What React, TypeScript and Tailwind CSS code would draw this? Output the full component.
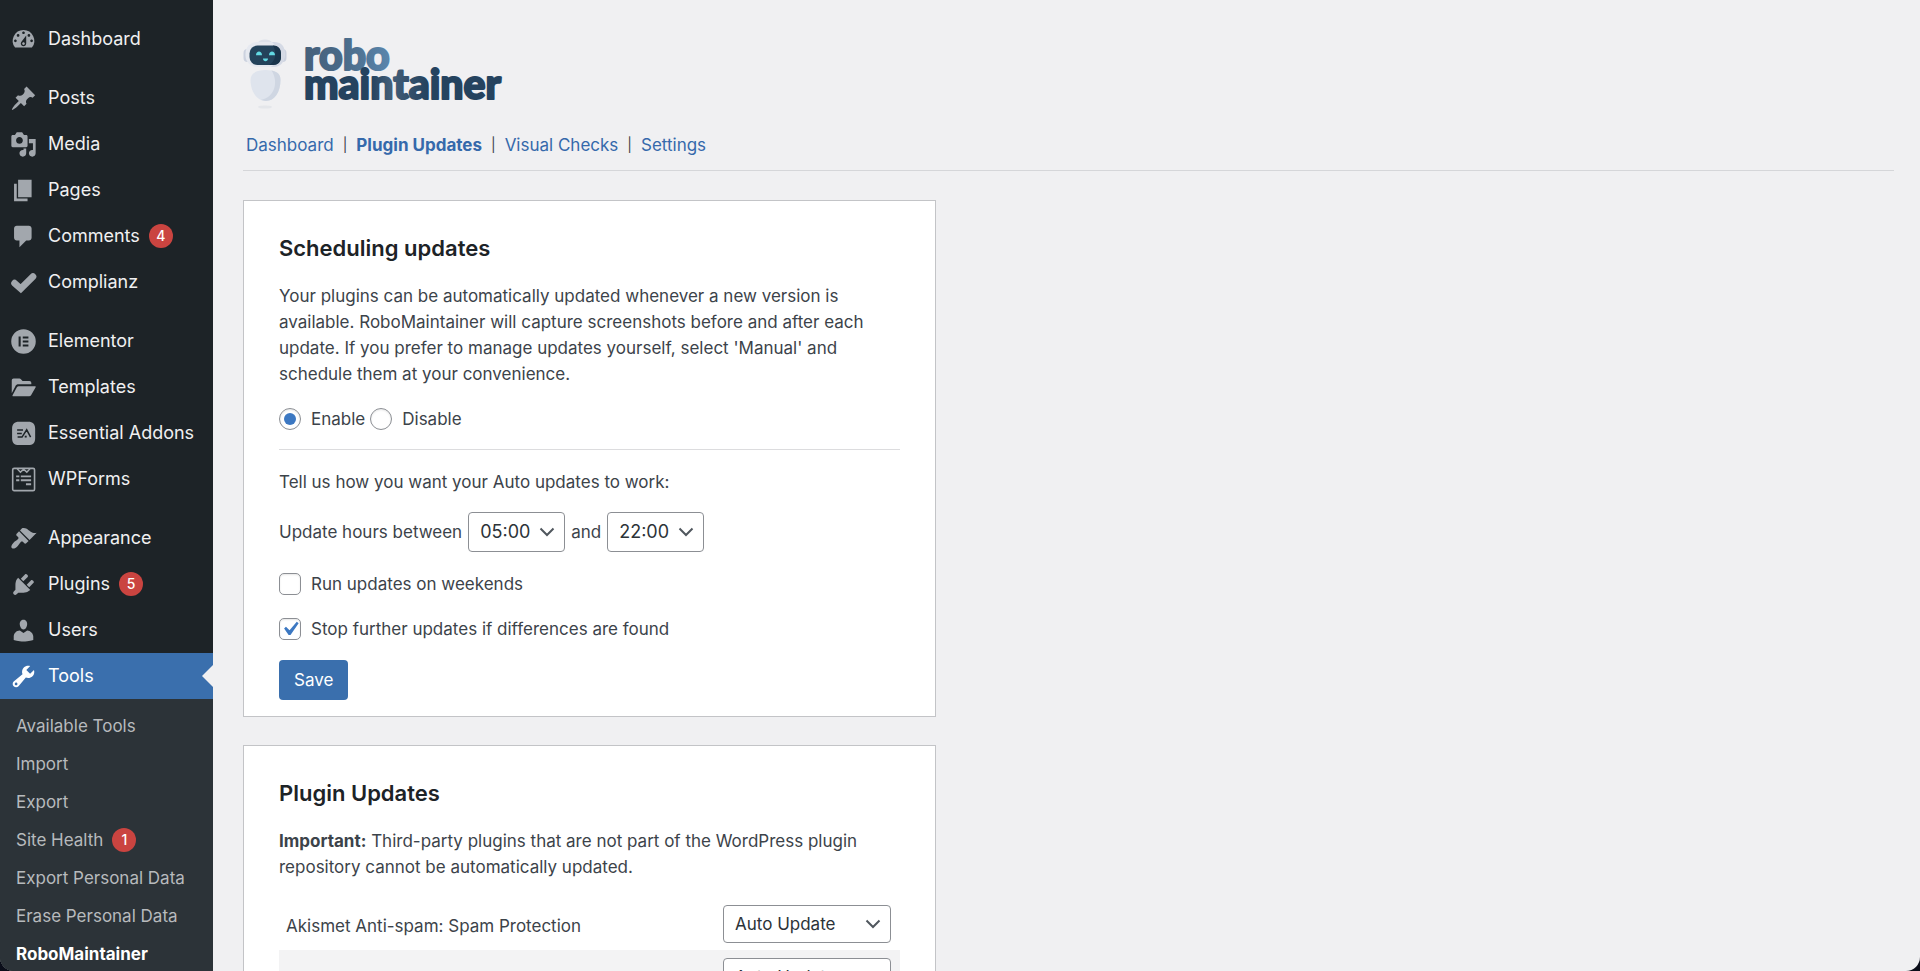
import React, { useState } from "react";

type IconProps = { children: React.ReactNode; box?: string };

const Glyph = ({ children, box = "0 0 20 20" }: IconProps) => (
  <svg viewBox={box} className="h-[27px] w-[27px] shrink-0" fill="currentColor" fillRule="evenodd" aria-hidden="true">
    {children}
  </svg>
);

const icons: Record<string, React.ReactNode> = {
  dashboard: (
    <path d="M3.76 16h12.48A7.998 7.998 0 0 0 10 3a7.998 7.998 0 0 0-6.24 13zM10 4c.55 0 1 .45 1 1s-.45 1-1 1-1-.45-1-1 .45-1 1-1zM6 6c.55 0 1 .45 1 1s-.45 1-1 1-1-.45-1-1 .45-1 1-1zm8 0c.55 0 1 .45 1 1s-.45 1-1 1-1-.45-1-1 .45-1 1-1zm-5.37 5.55L12 7v6c0 1.1-.9 2-2 2s-2-.9-2-2c0-.57.24-1.08.63-1.45zM4 10c.55 0 1 .45 1 1s-.45 1-1 1-1-.45-1-1 .45-1 1-1zm12 0c.55 0 1 .45 1 1s-.45 1-1 1-1-.45-1-1 .45-1 1-1zm-5 3c0-.55-.45-1-1-1s-1 .45-1 1 .45 1 1 1 1-.45 1-1z" />
  ),
  posts: (
    <path d="M10.44 3.02l1.82-1.82 6.36 6.35-1.83 1.82c-1.05-.68-2.48-.57-3.41.36l-.75.75c-.92.93-1.04 2.35-.35 3.41l-1.83 1.82-2.41-2.41-2.8 2.79c-.42.42-3.38 2.71-3.8 2.29s1.86-3.39 2.28-3.81l2.79-2.79L4.1 9.36l1.83-1.82c1.05.69 2.48.57 3.4-.36l.75-.75c.93-.92 1.05-2.35.36-3.41z" />
  ),
  media: (
    <path d="M13 11V4c0-.55-.45-1-1-1h-1.67L9 1H5L3.67 3H2c-.55 0-1 .45-1 1v7c0 .55.45 1 1 1h10c.55 0 1-.45 1-1zM7 4.5c1.38 0 2.5 1.12 2.5 2.5S8.38 9.5 7 9.5 4.5 8.38 4.5 7 5.62 4.5 7 4.5zM14 6h5v10.5c0 1.38-1.12 2.5-2.5 2.5S14 17.88 14 16.5s1.12-2.5 2.5-2.5c.17 0 .34.02.5.05V9h-3V6zm-4 8.05V13h2v3.5c0 1.38-1.12 2.5-2.5 2.5S7 17.88 7 16.5 8.12 14 9.5 14c.17 0 .34.02.5.05z" />
  ),
  pages: <path d="M6 15V2h10v13H6zm-1 1h8v2H3V5h2v11z" />,
  comments: <path d="M5 2h9c1.1 0 2 .9 2 2v7c0 1.1-.9 2-2 2h-2l-5 5v-5H5c-1.1 0-2-.9-2-2V4c0-1.1.9-2 2-2z" />,
  complianz: (
    <path
      d="M3.4 10.5 L8 14.6 L17 5.6"
      fill="none"
      stroke="currentColor"
      strokeWidth="5"
      strokeLinecap="round"
      strokeLinejoin="miter"
    />
  ),
  elementor: (
    <path d="M10 0a10 10 0 1 0 0 20 10 10 0 0 0 0-20zM6 5.9h1.7v8.2H6zM9.4 5.9h4.6v1.6H9.4zM9.4 9.2h4.6v1.6H9.4zM9.4 12.5h4.6v1.6H9.4z" />
  ),
  templates: (
    <>
      <path d="M1.3 14.2V4.8c0-.8.6-1.4 1.4-1.4h4.3c.5 0 .8.2 1.1.5l1.2 1.3h5.1c.8 0 1.4.6 1.4 1.4v1H6.3c-1 0-1.9.5-2.3 1.4z" />
      <path d="M2.3 16.5c-.4 0-.6-.4-.4-.8l3.2-5.9c.3-.5.8-.8 1.4-.8h12c.5 0 .8.5.5.9l-3.4 5.8c-.3.5-.8.8-1.4.8z" />
    </>
  ),
  essential: (
    <>
      <path d="M6.3.5h7.6c3.7 0 5.6 1.9 5.6 5.6v7.7c0 3.7-1.9 5.6-5.6 5.6H6.3c-3.7 0-5.6-1.9-5.6-5.6V6.1C.7 2.4 2.6.5 6.3.5z" />
      <g stroke="#1d2327" strokeWidth="1.2" fill="none">
        <path d="M4.8 7.1h4.8M4.8 10h3.8M5.2 12.9h3.6L12.6 7l3.2 6" />
      </g>
      <path d="M11 11.8h1.6v1.5H11z" fill="#1d2327" />
    </>
  ),
  wpforms: (
    <g fill="none" stroke="currentColor">
      <rect x="1.2" y="0.9" width="17.8" height="18.2" rx="1.2" strokeWidth="1.3" />
      <path d="M4.9 1.3l2.6 2.7L10.1 1.6l2.6 2.4 2.6-2.7" strokeWidth="1.2" />
      <path d="M4 7.4h2.6M7.8 7.4h8.4M4 10.6h2.6M7.8 10.6h8.4M12 13.9h4.2" strokeWidth="1.5" />
    </g>
  ),
  appearance: (
    <path d="M14.48 11.06L7.41 3.99l1.5-1.5c.5-.56 2.3-.47 3.51.32 1.21.8 1.43 1.28 2.91 2.1 1.18.64 2.45 1.26 4.45.85zm-.71.71L6.7 4.7 4.93 6.47c-.39.39-.39 1.02 0 1.41l1.06 1.06c.39.39.39 1.03 0 1.42-.6.6-1.43 1.11-2.21 1.69-.35.26-.7.53-1.01.84C1.43 14.23.4 16.08 1.4 17.07c.99 1 2.84-.03 4.18-1.36.31-.31.58-.66.85-1.02.57-.78 1.08-1.61 1.69-2.21.39-.39 1.02-.39 1.41 0l1.06 1.06c.39.39 1.02.39 1.41 0z" />
  ),
  plugins: (
    <path d="M13.11 4.36L9.87 7.6 8 5.73l3.24-3.24c.35-.34 1.05-.2 1.56.32.52.51.66 1.21.31 1.55zm-8 1.77l.91-1.12 9.01 9.01-1.19.84c-.71.71-2.63 1.16-3.82 1.16H6.14L4.9 17.26c-.59.59-1.54.59-2.12 0a1.49 1.49 0 0 1 0-2.12l1.24-1.24v-3.88c0-1.13.4-3.19 1.09-3.89zm7.26 3.97l3.24-3.24c.34-.35 1.04-.21 1.55.31.52.51.66 1.21.31 1.55l-3.24 3.25z" />
  ),
  users: (
    <path d="M10 9.25c-2.27 0-2.73-3.44-2.73-3.44C7 4.02 7.82 2 9.97 2c2.16 0 2.98 2.02 2.71 3.81 0 0-.41 3.44-2.68 3.44zm0 2.57L12.72 10c2.39 0 4.52 2.33 4.52 4.53v2.49s-3.65 1.13-7.24 1.13c-3.65 0-7.24-1.13-7.24-1.13v-2.49c0-2.25 1.94-4.48 4.47-4.48z" />
  ),
  tools: (
    <path d="M16.68 9.77c-1.34 1.34-3.3 1.67-4.95.99l-5.41 6.52c-.99.99-2.59.99-3.58 0s-.99-2.59 0-3.57l6.52-5.42c-.68-1.65-.35-3.61.99-4.95 1.28-1.28 3.12-1.62 4.72-1.06l-2.89 2.89 2.82 2.82 2.86-2.87c.53 1.58.18 3.39-1.08 4.65zM3.81 16.21c.4.39 1.04.39 1.43 0 .4-.4.4-1.04 0-1.43-.39-.4-1.03-.4-1.43 0-.39.39-.39 1.03 0 1.43z" />
  ),
};

type Item = { icon: string; label: string; count?: number; current?: boolean };

const menu: Item[][] = [
  [{ icon: "dashboard", label: "Dashboard" }],
  [
    { icon: "posts", label: "Posts" },
    { icon: "media", label: "Media" },
    { icon: "pages", label: "Pages" },
    { icon: "comments", label: "Comments", count: 4 },
    { icon: "complianz", label: "Complianz" },
  ],
  [
    { icon: "elementor", label: "Elementor" },
    { icon: "templates", label: "Templates" },
    { icon: "essential", label: "Essential Addons" },
    { icon: "wpforms", label: "WPForms" },
  ],
  [
    { icon: "appearance", label: "Appearance" },
    { icon: "plugins", label: "Plugins", count: 5 },
    { icon: "users", label: "Users" },
    { icon: "tools", label: "Tools", current: true },
  ],
];

const submenu: { label: string; count?: number; current?: boolean }[] = [
  { label: "Available Tools" },
  { label: "Import" },
  { label: "Export" },
  { label: "Site Health", count: 1 },
  { label: "Export Personal Data" },
  { label: "Erase Personal Data" },
  { label: "RoboMaintainer", current: true },
];

const Badge = ({ n }: { n: number }) => (
  <span className="ml-[9px] flex h-6 w-6 items-center justify-center rounded-full bg-[#ca4440] text-sm font-medium text-white">
    {n}
  </span>
);

function Sidebar() {
  return (
    <nav aria-label="Main menu" className="flex w-[213px] shrink-0 flex-col bg-[#1d2327] pt-4">
      <div className="flex flex-col gap-[13px]">
        {menu.map((group, i) => (
          <ul key={i}>
            {group.map((item) => (
              <li key={item.label} className="relative">
                <a
                  href="#"
                  className={
                    item.current
                      ? "flex h-[46px] items-center bg-[#3a6fad] pl-[10px] text-lg text-white"
                      : "flex h-[46px] items-center pl-[10px] text-lg text-[#f0f0f1]"
                  }
                >
                  <span className={item.current ? "text-white" : "text-[#a2a7ad]"}>
                    {item.icon === "elementor" || item.icon === "essential" || item.icon === "wpforms" ? (
                      <Glyph box="-1 -1 22 22">{icons[item.icon]}</Glyph>
                    ) : (
                      <Glyph>{icons[item.icon]}</Glyph>
                    )}
                  </span>
                  <span className="ml-[11px] whitespace-nowrap">{item.label}</span>
                  {item.count !== undefined && <Badge n={item.count} />}
                </a>
                {item.current && (
                  <span className="absolute top-1/2 right-0 -mt-[11px] border-y-[11px] border-r-[11px] border-y-transparent border-r-[#f0f0f2]" />
                )}
              </li>
            ))}
          </ul>
        ))}
      </div>
      <ul className="grow bg-[#2c3338] pt-2">
        {submenu.map((s) => (
          <li key={s.label}>
            <a
              href="#"
              className={
                s.current
                  ? "flex h-[38px] items-center pl-4 text-[17px] font-bold whitespace-nowrap text-white"
                  : "flex h-[38px] items-center pl-4 text-[17px] whitespace-nowrap text-[#b7babd]"
              }
            >
              {s.label}
              {s.count !== undefined && <Badge n={s.count} />}
            </a>
          </li>
        ))}
      </ul>
    </nav>
  );
}

function Logo() {
  return (
    <div className="flex items-start">
      <svg viewBox="0 0 46 74" className="h-[74px] w-[46px]" aria-hidden="true">
        <ellipse cx="22" cy="69" rx="7" ry="1.6" fill="#e4e6ea" />
        <ellipse cx="22" cy="5" rx="7" ry="3.5" fill="#dde1ea" />
        <rect x="0.5" y="11" width="8" height="13" rx="4" fill="#ccd2df" />
        <rect x="35.5" y="11" width="8" height="13" rx="4" fill="#ccd2df" />
        <rect x="2.5" y="4" width="39" height="25" rx="11.5" fill="#e6e9f0" />
        <path d="M29 4h2c7 0 10.5 4 10.5 9v5c0 7-5 11-11 11h-3c8-4 10-18 1.5-25z" fill="#d5dae5" />
        <rect x="6.5" y="7.5" width="31.5" height="19.5" rx="8" fill="#24435b" />
        <path d="M30 7.5c5 0 8 3 8 8V19c0 5-3 8-8 8h-4c7-4 8-12 4-19.5z" fill="#1a354b" />
        <path d="M13 17.2c0-5 6-5 6 0zM26 17.2c0-5 6-5 6 0zM20 20.5h5c0 3.6-5 3.6-5 0z" fill="#62d9e3" />
        <path d="M22.5 32c9 0 15 3 15 10 0 12-6 21-14.5 21S7.5 54 7.5 42c0-7 6-10 15-10z" fill="#dfe4ed" />
        <path d="M28.5 32.5c6 1 9 4 9 9.5 0 12-6 21-14.5 21-2 0-3.500-.5-5-1.2C30.500 60 36.500 45 28.500 32.500z" fill="#cfd6e2" />
      </svg>
      <svg viewBox="0 0 204 68" className="ml-[15px] h-[68px] w-[204px] overflow-visible" role="img" aria-label="robo maintainer">
        <defs>
          <linearGradient id="robo" x1="0" x2="1">
            <stop offset="0" stopColor="#45607b" />
            <stop offset="0.45" stopColor="#4a6a88" />
            <stop offset="1" stopColor="#5a86ac" />
          </linearGradient>
          <linearGradient id="maintainer" x1="0" x2="1">
            <stop offset="0" stopColor="#25435f" />
            <stop offset="0.34" stopColor="#25435f" />
            <stop offset="0.44" stopColor="#435e78" />
            <stop offset="0.62" stopColor="#25435f" />
            <stop offset="1" stopColor="#25435f" />
          </linearGradient>
        </defs>
        <g className="font-['Lato',sans-serif] text-[41px] font-black" strokeWidth="2" strokeLinejoin="round">
          <text x="0" y="32" fill="url(#robo)" stroke="url(#robo)">
            robo
          </text>
          <text x="0" y="61" fill="url(#maintainer)" stroke="url(#maintainer)">
            maintainer
          </text>
        </g>
      </svg>
    </div>
  );
}

const Chevron = () => (
  <svg viewBox="0 0 16 16" className="pointer-events-none absolute right-[10px] h-4 w-4" fill="none" stroke="#50575e" strokeWidth="2" aria-hidden="true">
    <path d="M1.5 4.5 8 11l6.5-6.5" />
  </svg>
);

function Select({ label, value, options, wide }: { label: string; value: string; options: string[]; wide?: boolean }) {
  const [v, setV] = useState(value);
  return (
    <span className="relative inline-flex items-center">
      <select
        aria-label={label}
        value={v}
        onChange={(e) => setV(e.target.value)}
        className={
          wide
            ? "h-[38px] w-[168px] appearance-none rounded border border-[#8c8f94] bg-white pr-8 pl-[11px] text-[17px] text-[#2c3338]"
            : "h-10 w-[97px] appearance-none rounded border border-[#8c8f94] bg-white pr-6 pl-[11px] text-lg text-[#2c3338]"
        }
      >
        {options.map((o) => (
          <option key={o}>{o}</option>
        ))}
      </select>
      <Chevron />
    </span>
  );
}

const Check = ({ label, initial }: { label: string; initial?: boolean }) => {
  const [on, setOn] = useState(!!initial);
  return (
    <label className="flex h-[22px] w-fit items-center gap-[10px]">
      <span className="relative flex h-[22px] w-[22px] items-center justify-center">
        <input
          type="checkbox"
          checked={on}
          onChange={(e) => setOn(e.target.checked)}
          className="h-[22px] w-[22px] appearance-none rounded-[5px] border border-[#8c8f94] bg-white shadow-[inset_0_1px_2px_rgba(0,0,0,0.1)]"
        />
        {on && (
          <svg viewBox="0 0 20 20" className="pointer-events-none absolute h-7 w-7" fill="#3c78c2" aria-hidden="true">
            <path d="M14.83 4.89l1.34.94-5.81 8.38H9.02L5.78 9.67l1.34-1.25 2.57 2.4z" />
          </svg>
        )}
      </span>
      {label}
    </label>
  );
};

const Radio = ({ label, checked, onPick }: { label: string; checked: boolean; onPick: () => void }) => (
  <label className="flex items-center gap-[10px]">
    <span className="relative flex items-center justify-center">
      <input
        type="radio"
        name="auto-updates"
        checked={checked}
        onChange={onPick}
        className="h-[22px] w-[22px] appearance-none rounded-full border border-[#8c8f94] bg-white shadow-[inset_0_1px_2px_rgba(0,0,0,0.1)]"
      />
      {checked && <span className="pointer-events-none absolute h-3 w-3 rounded-full bg-[#3c78c2]" />}
    </span>
    {label}
  </label>
);

const tabs = ["Dashboard", "Plugin Updates", "Visual Checks", "Settings"];
const hours = Array.from({ length: 24 }, (_, h) => String(h).padStart(2, "0") + ":00");
const modes = ["Auto Update", "Manual"];

export default function App() {
  const [enabled, setEnabled] = useState(true);
  return (
    <div className="h-screen overflow-hidden bg-[#0b0e1a]">
      <div className="flex h-full overflow-hidden rounded-b-[14px] bg-[#f0f0f2] font-['Inter','Liberation_Sans',sans-serif] text-[17px] leading-[26px] text-[#3c434a]">
        <Sidebar />
        <main className="min-w-0 grow pt-[38px] pr-[26px] pl-[30px]">
          <Logo />
          <nav aria-label="RoboMaintainer" className="mt-5 flex border-b border-[#d5d6d9] pb-3 pl-[3px]">
            {tabs.map((t, i) => (
              <span key={t} className="flex">
                {i > 0 && <span className="px-[9px] text-sm leading-[26px]">|</span>}
                <a href="#" className={i === 1 ? "font-bold text-[#3569ab]" : "text-[#3569ab]"}>
                  {t}
                </a>
              </span>
            ))}
          </nav>

          <section className="mt-[29px] w-full max-w-[693px] border border-[#c3c4c7] bg-white pt-[33px] pr-[35px] pb-4 pl-[35px]">
            <h2 className="text-[22px] leading-7 font-semibold text-[#1d2327]">Scheduling updates</h2>
            <p className="mt-[21px]">
              Your plugins can be automatically updated whenever a new version is available. RoboMaintainer will capture
              screenshots before and after each update. If you prefer to manage updates yourself, select 'Manual' and
              schedule them at your convenience.
            </p>
            <div className="mt-[19px] flex gap-[5px]">
              <Radio label="Enable" checked={enabled} onPick={() => setEnabled(true)} />
              <Radio label="Disable" checked={!enabled} onPick={() => setEnabled(false)} />
            </div>
            <hr className="mt-[17px] border-[#dcdcde]" />
            <p className="mt-[19px]">Tell us how you want your Auto updates to work:</p>
            <div className="mt-[17px] flex items-center gap-[6px]">
              <span>Update hours between</span>
              <Select label="Start hour" value="05:00" options={hours} />
              <span>and</span>
              <Select label="End hour" value="22:00" options={hours} />
            </div>
            <div className="mt-[21px] flex flex-col gap-[23px]">
              <Check label="Run updates on weekends" />
              <Check label="Stop further updates if differences are found" initial />
            </div>
            <button type="button" className="mt-5 h-10 rounded bg-[#3a6fad] px-[15px] text-white">
              Save
            </button>
          </section>

          <section className="mt-7 w-full max-w-[693px] border border-[#c3c4c7] bg-white pt-[33px] pr-[35px] pb-4 pl-[35px]">
            <h2 className="text-[22px] leading-7 font-semibold text-[#1d2327]">Plugin Updates</h2>
            <p className="mt-[21px]">
              <strong className="font-bold">Important:</strong> Third-party plugins that are not part of the WordPress
              plugin repository cannot be automatically updated.
            </p>
            <table className="mt-[17px] w-full">
              <tbody>
                <tr className="h-[53px]">
                  <td className="pt-1 pl-[7px]">Akismet Anti-spam: Spam Protection</td>
                  <td className="w-[177px]">
                    <Select wide label="Update mode for Akismet Anti-spam" value="Auto Update" options={modes} />
                  </td>
                </tr>
                <tr className="h-[53px] bg-[#f3f3f4]">
                  <td className="pt-1 pl-[7px]" />
                  <td className="w-[177px]">
                    <Select wide label="Update mode" value="Auto Update" options={modes} />
                  </td>
                </tr>
              </tbody>
            </table>
          </section>
        </main>
      </div>
    </div>
  );
}
